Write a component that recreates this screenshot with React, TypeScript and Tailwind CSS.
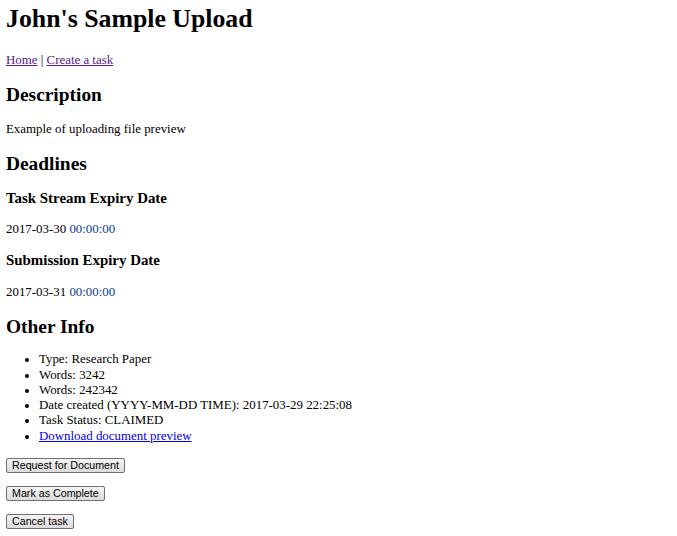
export default function App() {
  const btn =
    "block h-[15px] border border-[#707070] rounded-[2px] bg-gradient-to-b from-[#f4f4f4] to-[#dcdcdc] px-[5px] py-0 leading-[13px] text-[10.7px] text-black font-['Liberation_Sans',Arial,sans-serif]";
  const h2 = "text-[19.4px] font-bold leading-[22px]";
  const h3 = "text-[14.9px] font-bold leading-[17px]";
  return (
    <div className="min-h-screen bg-white px-[6px] pt-[4px] text-[12.9px] leading-[15px] text-black font-['Liberation_Serif','Times_New_Roman',serif]">
      <h1 className="text-[25.8px] font-bold leading-[30px]">John's Sample Upload</h1>
      <p className="mt-[19px]">
        <a href="#" className="text-[#551a8b] underline">Home</a> |{" "}
        <a href="#" className="text-[#551a8b] underline">Create a task</a>
      </p>
      <h2 className={`mt-[16px] ${h2}`}>Description</h2>
      <p className="mt-[16.3px]">Example of uploading file preview</p>
      <h2 className={`mt-[15.3px] ${h2}`}>Deadlines</h2>
      <h3 className={`mt-[15px] ${h3}`}>Task Stream Expiry Date</h3>
      <p className="mt-[15.5px]">
        2017-03-30 <span className="text-[#0b3d9c]">00:00:00</span>
      </p>
      <h3 className={`mt-[15px] ${h3}`}>Submission Expiry Date</h3>
      <p className="mt-[15.5px]">
        2017-03-31 <span className="text-[#0b3d9c]">00:00:00</span>
      </p>
      <h2 className={`mt-[16.6px] ${h2}`}>Other Info</h2>
      <ul className="mt-[14.3px] list-disc pl-[33px] leading-[15.2px]">
        <li>Type: Research Paper</li>
        <li>Words: 3242</li>
        <li>Words: 242342</li>
        <li>Date created (YYYY-MM-DD TIME): 2017-03-29 22:25:08</li>
        <li>Task Status: CLAIMED</li>
        <li>
          <a href="#" className="text-[#0000ee] underline">Download document preview</a>
        </li>
      </ul>
      <form className="mt-[14px]">
        <button type="button" className={btn}>Request for Document</button>
      </form>
      <form className="mt-[13px]">
        <button type="button" className={btn}>Mark as Complete</button>
      </form>
      <form className="mt-[13.5px]">
        <button type="button" className={btn}>Cancel task</button>
      </form>
    </div>
  );
}
